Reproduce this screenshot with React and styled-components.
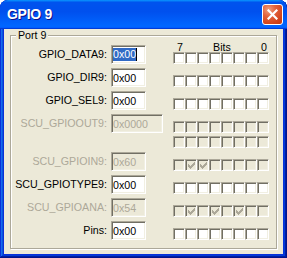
import React from 'react'
import styled, { createGlobalStyle } from 'styled-components'

const GlobalStyle = createGlobalStyle`
  html, body {
    margin: 0;
    padding: 0;
    background: #ffffff;
  }
  body {
    font-family: "Liberation Sans", Arial, sans-serif;
    font-size: 10.67px;
  }
`

const registers = [
  { label: 'GPIO_DATA9:', value: '0x00', selected: true },
  { label: 'GPIO_DIR9:', value: '0x00' },
  { label: 'GPIO_SEL9:', value: '0x00' },
  { label: 'SCU_GPIOOUT9:', value: '0x0000', disabled: true, wide: true, bitRows: 2 },
  { label: 'SCU_GPIOIN9:', value: '0x60', disabled: true },
  { label: 'SCU_GPIOTYPE9:', value: '0x00' },
  { label: 'SCU_GPIOANA:', value: '0x54', disabled: true },
  { label: 'Pins:', value: '0x00' },
]

const Window = styled.div`
  width: 287px;
  height: 258px;
  box-sizing: border-box;
  display: flex;
  flex-direction: column;
  border-radius: 8px 8px 0 0;
  overflow: hidden;
  background: #0831d9;
  box-shadow: inset -1px -1px #00138c, inset 1px 1px #0831d9,
    inset -2px -2px #001ea0, inset 2px 2px #166aee,
    inset -3px -3px #003bda, inset 3px 3px #0855dd;
`

const TitleBar = styled.div`
  height: 29px;
  flex: none;
  display: flex;
  align-items: center;
  justify-content: space-between;
  padding: 0 4px 0 7px;
  background: linear-gradient(180deg, #0997ff, #0053ee 8%, #0050ee 40%, #06f 88%, #06f 93%, #005bff 95%, #003dd7 96%, #003dd7);
  border-radius: 8px 8px 0 0;
`

const Title = styled.span`
  color: #ffffff;
  font-family: "Liberation Sans", Arial, sans-serif;
  font-weight: bold;
  font-size: 14px;
  letter-spacing: -0.3px;
  text-shadow: 1px 1px #0f1089;
  padding-bottom: 1px;
`

const CloseButton = styled.div`
  width: 21px;
  height: 21px;
  box-sizing: border-box;
  border: 1px solid #ffffff;
  border-radius: 3px;
  background: radial-gradient(circle at 30% 25%, #f0a080 0%, #e2623c 35%, #d1421a 75%, #c13912 100%);
  display: flex;
  align-items: center;
  justify-content: center;
  margin-top: -1px;
`

const Body = styled.div`
  flex: 1;
  margin: 0 4px 4px;
  background: #ece9d8;
  display: flex;
  flex-direction: column;
`

const Group = styled.fieldset`
  margin: 0 6px 5px;
  padding: 0 0 8px;
  border: 1px solid #aca899;
  box-shadow: inset 1px 1px #ffffff, 1px 1px #ffffff;
  min-width: 0;
`

const Legend = styled.legend`
  margin-left: 5px;
  padding: 0 2px;
  line-height: 12px;
  color: #000000;
  background: #ece9d8;
`

const Row = styled.div`
  display: grid;
  grid-template-columns: 96px 58px 96px;
  column-gap: 4px;
  align-items: start;
`

const Label = styled.div`
  margin-top: 4px;
  height: 19px;
  line-height: 19px;
  text-align: right;
  white-space: nowrap;
  color: ${p => (p.$disabled ? '#aca899' : '#000000')};
`

const Field = styled.div`
  margin-top: 4px;
  width: ${p => (p.$wide ? 52 : 35)}px;
  height: 19px;
  box-sizing: border-box;
  padding-left: 1px;
  display: flex;
  align-items: center;
  border-style: solid;
  border-width: 1px;
  border-color: #aca899 #ffffff #ffffff #aca899;
  box-shadow: inset 1px 1px #716f64, inset -1px -1px #f1efe2;
  background: ${p => (p.$disabled ? '#ece9d8' : '#ffffff')};
  color: ${p => (p.$disabled ? '#aca899' : '#000000')};
  white-space: nowrap;
  overflow: hidden;
`

const Selection = styled.span`
  background: #316ac5;
  color: #ffffff;
  line-height: 13px;
`

const Caret = styled.span`
  width: 1px;
  height: 13px;
  background: #000000;
`

const BitCell = styled.div`
  display: flex;
  flex-direction: column;
  padding-top: ${p => (p.$withHeader ? 0 : 11)}px;
`

const BitHeader = styled.div`
  height: 11px;
  line-height: 12px;
  display: flex;
  justify-content: space-between;
  padding: 0 2px 0 4px;
`

const BitRow = styled.div`
  display: flex;
  & + & {
    margin-top: 3px;
  }
`

const Box = styled.div`
  width: 12px;
  height: 12px;
  box-sizing: border-box;
  border-style: solid;
  border-width: 1px;
  border-color: #aca899 #ffffff #ffffff #aca899;
  box-shadow: inset 1px 1px #716f64, inset -1px -1px #f1efe2;
  background: ${p => (p.$disabled ? '#ece9d8' : '#ffffff')};
  display: flex;
  align-items: center;
  justify-content: center;
`

const Check = () => (
  <svg width="7" height="7" viewBox="0 0 7 7" shapeRendering="crispEdges">
    <path
      d="M0 2h1v1h1v1h1v-1h1v-1h1v-1h1v-1h1v3h-1v1h-1v1h-1v1h-1v1h-1v-1h-1v-1h-1z"
      fill="#aca899"
    />
  </svg>
)

const Bits = ({ value, disabled, rows = 1 }) => {
  const n = parseInt(value, 16)
  return Array.from({ length: rows }).map((_, r) => (
    <BitRow key={r}>
      {Array.from({ length: 8 }).map((__, i) => {
        const bit = 7 - i + (rows - 1 - r) * 8
        const on = disabled && ((n >> bit) & 1) === 1
        return (
          <Box key={i} $disabled={disabled}>
            {on && <Check />}
          </Box>
        )
      })}
    </BitRow>
  ))
}

export default function App() {
  return (
    <>
      <GlobalStyle />
      <Window>
        <TitleBar>
          <Title>GPIO 9</Title>
          <CloseButton>
            <svg width="11" height="11" viewBox="0 0 11 11">
              <path d="M1.5 1.5 L9.5 9.5 M9.5 1.5 L1.5 9.5" stroke="#ffffff" strokeWidth="2.2" strokeLinecap="square" />
            </svg>
          </CloseButton>
        </TitleBar>
        <Body>
          <Group>
            <Legend>Port 9</Legend>
            {registers.map((reg, idx) => (
              <Row key={reg.label}>
                <Label $disabled={reg.disabled}>{reg.label}</Label>
                <Field $disabled={reg.disabled} $wide={reg.wide}>
                  {reg.selected ? (
                    <>
                      <Selection>{reg.value}</Selection>
                      <Caret />
                    </>
                  ) : (
                    reg.value
                  )}
                </Field>
                <BitCell $withHeader={idx === 0}>
                  {idx === 0 && (
                    <BitHeader>
                      <span>7</span>
                      <span>Bits</span>
                      <span>0</span>
                    </BitHeader>
                  )}
                  <Bits value={reg.value} disabled={reg.disabled} rows={reg.bitRows} />
                </BitCell>
              </Row>
            ))}
          </Group>
        </Body>
      </Window>
    </>
  )
}
